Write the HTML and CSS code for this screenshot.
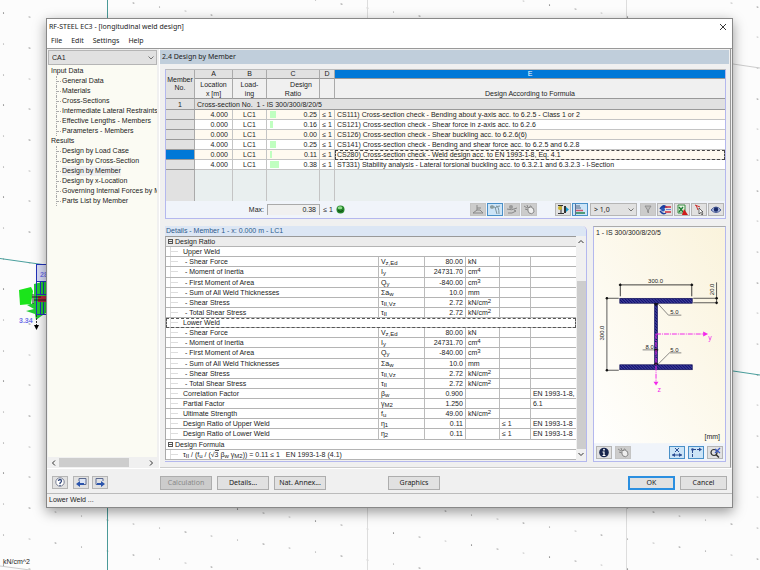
FILE: index.html
```html
<!DOCTYPE html>
<html lang="en">
<head>
<meta charset="utf-8">
<title>RF-STEEL EC3 - [longitudinal weld design]</title>
<link rel="stylesheet" href="styles.css">
</head>
<body>
<svg class="model" viewBox="0 0 760 570" preserveAspectRatio="xMinYMin slice" aria-hidden="true">
  <defs>
    <pattern id="grid" width="78" height="92" patternUnits="userSpaceOnUse" patternTransform="skewY(8.75)">
      <rect x="3" y="12" width="1" height="1" fill="#444"/><rect x="29" y="12" width="1" height="1" fill="#555"/><rect x="55" y="12" width="1" height="1" fill="#999"/>
      <rect x="3" y="43" width="1" height="1" fill="#999"/><rect x="29" y="43" width="1" height="1" fill="#333"/><rect x="55" y="43" width="1" height="1" fill="#777"/>
      <rect x="3" y="74" width="1" height="1" fill="#888"/><rect x="29" y="74" width="1" height="1" fill="#888"/><rect x="55" y="74" width="1" height="1" fill="#444"/>
    </pattern>
  </defs>
  <rect width="760" height="570" fill="url(#grid)"/>
  <path d="M367.5 0V570M626.5 0V570" stroke="#ddd"/>
  <path d="M107.5 0V570" stroke="#4a9a98"/>
  <path d="M733 64L760 68M0 566L30 570" stroke="#ccc" fill="none"/>
  <path d="M0 258.500L46 265M733 371L760 375" stroke="#4a9f9d" fill="none"/>
  <path d="M19 290L31 287L33 291L31 304L20 305Z" fill="#1be41b"/>
  <path d="M34 284L46 281V313L40 317L36 320L35 314L26 311L34 309L27 305L34 303Z" fill="#22cc33"/>
  <rect x="36" y="264" width="10" height="17" fill="#d9dcf6"/>
  <path d="M36.500 264V315M36 264.500H46M36 281.500H46M40.500 282V294M43.500 282V294M37 294.500H46M40.500 302V314M43.500 302V314M36 314.500H46" stroke="#2232b8" fill="none"/>
  <rect x="38" y="296" width="8" height="6" fill="#b8283c"/>
  <path d="M33 294V304M32 297H41M34 300H46" stroke="#222" fill="none"/>
  <path d="M36.500 315V325" stroke="#333" stroke-dasharray="2 1"/><path d="M34 325H39L36.500 330Z"/>
  <text x="40" y="277" class="model-value">28</text>
  <text x="19" y="323" class="model-value">3.34</text>
  <text x="3" y="564" class="model-unit">kN/cm^2</text>
</svg>

<main class="window">
  <header class="titlebar">
    <h1>RF-STEEL EC3 - [longitudinal weld design]</h1>
    <button class="close" aria-label="Close"><svg width="8" height="8" viewBox="0 0 8 8"><path d="M1 1L7 7M7 1L1 7" stroke="#222" stroke-width=".9"/></svg></button>
  </header>
  <nav class="menu"><a href="#">File</a><a href="#">Edit</a><a href="#">Settings</a><a href="#">Help</a></nav>

  <div class="body">
    <aside class="sidebar">
      <span class="pick case">
        <select aria-label="Design case"><option>CA1</option></select>
        <svg width="6" height="4" viewBox="0 0 6 4"><path d="M.5 .5L3 3L5.500 .5" fill="none" stroke="#555" stroke-width=".8"/></svg>
      </span>
      <div class="tree">
        <p>Input Data</p>
        <ul><li><a href="#">General Data</a></li><li><a href="#">Materials</a></li><li><a href="#">Cross-Sections</a></li><li><a href="#">Intermediate Lateral Restraints</a></li><li><a href="#">Effective Lengths - Members</a></li><li><a href="#">Parameters - Members</a></li></ul>
        <p>Results</p>
        <ul><li><a href="#">Design by Load Case</a></li><li><a href="#">Design by Cross-Section</a></li><li><a href="#" class="current">Design by Member</a></li><li><a href="#">Design by x-Location</a></li><li><a href="#">Governing Internal Forces by M</a></li><li><a href="#">Parts List by Member</a></li></ul>
      </div>
      <div class="hscroll">
        <svg width="5" height="6" viewBox="0 0 5 6"><path d="M4 .5L1.500 3L4 5.500" fill="none" stroke="#333"/></svg>
        <div class="rail"><div class="thumb"></div></div>
        <svg width="5" height="6" viewBox="0 0 5 6"><path d="M1 .5L3.500 3L1 5.500" fill="none" stroke="#333"/></svg>
      </div>
    </aside>

    <section class="content">
      <h2>2.4 Design by Member</h2>
      <div class="results">
        <table class="grid">
          <colgroup><col class="c-no"><col class="c-a"><col class="c-b"><col class="c-c"><col class="c-d"><col></colgroup>
          <thead>
            <tr class="letters"><th rowspan="2" class="no">Member<br>No.</th><th>A</th><th>B</th><th>C</th><th>D</th><th class="active">E</th></tr>
            <tr class="names"><th>Location<br>x [m]</th><th>Load-<br>ing</th><th class="design"><span>Design</span><br>Ratio</th><th></th><th class="formula">Design According to Formula</th></tr>
          </thead>
          <tbody>
            <tr class="group"><th>1</th><td colspan="5">Cross-section No.&nbsp; 1 - IS 300/300/8/20/5</td></tr>
            <tr><th></th><td class="num">4.000</td><td class="mid">LC1</td><td class="ratio"><div><i style="width:6px"></i>0.25</div></td><td class="mid">≤ 1</td><td>CS111) Cross-section check - Bending about y-axis acc. to 6.2.5 - Class 1 or 2</td></tr>
            <tr><th></th><td class="num">0.000</td><td class="mid">LC1</td><td class="ratio"><div><i style="width:3px"></i>0.16</div></td><td class="mid">≤ 1</td><td>CS121) Cross-section check - Shear force in z-axis acc. to 6.2.6</td></tr>
            <tr><th></th><td class="num">0.000</td><td class="mid">LC1</td><td class="ratio"><div><i style="width:0px"></i>0.00</div></td><td class="mid">≤ 1</td><td>CS126) Cross-section check - Shear buckling acc. to 6.2.6(6)</td></tr>
            <tr><th></th><td class="num">4.000</td><td class="mid">LC1</td><td class="ratio"><div><i style="width:6px"></i>0.25</div></td><td class="mid">≤ 1</td><td>CS141) Cross-section check - Bending and shear force acc. to 6.2.5 and 6.2.8</td></tr>
            <tr class="selected"><th></th><td class="num">0.000</td><td class="mid">LC1</td><td class="ratio"><div><i style="width:2px"></i>0.11</div></td><td class="mid">≤ 1</td><td class="focus">CS280) Cross-section check - Weld design acc. to EN 1993-1-8, Eq. 4.1</td></tr>
            <tr><th></th><td class="num">4.000</td><td class="mid">LC1</td><td class="ratio"><div><i style="width:9px"></i>0.38</div></td><td class="mid">≤ 1</td><td>ST331) Stability analysis - Lateral torsional buckling acc. to 6.3.2.1 and 6.3.2.3 - I-Section</td></tr>
            <tr class="blank"><th></th><td></td><td></td><td></td><td></td><td></td></tr>
          </tbody>
        </table>
        <div class="summary">
          <span class="max-label">Max:</span><output class="max">0.38</output><span class="limit">≤ 1</span>
          <svg width="9" height="9" viewBox="0 0 9 9"><circle cx="4.500" cy="4.500" r="4" fill="#23852a"/><ellipse cx="4" cy="2.800" rx="2.400" ry="1.500" fill="#8fdc8b"/><path d="M2 5.500Q4.500 7.500 7 5.500" stroke="#0c4a12" fill="none"/></svg>
          <div class="tools">
            <button class="off" aria-label="Internal forces"><svg viewBox="0 0 14 11"><path d="M6 1V6M6 4H10M2 9L6 6H9L12 9M2 9H12" stroke="#888" fill="none"/></svg></button>
            <button class="on" aria-label="Stresses"><svg viewBox="0 0 14 11"><circle cx="4" cy="3" r="2" fill="#97a5a5"/><path d="M2 3H7L9 10M8 2Q11 2 11 10M7 4Q9 2 12 2" stroke="#7d929a" fill="none"/></svg></button>
            <button class="off" aria-label="Deformation"><svg viewBox="0 0 14 11"><circle cx="6" cy="3" r="2" fill="#999"/><path d="M2 5Q6 7 12 4M3 9Q7 10 11 7L9 6" stroke="#888" fill="none"/></svg></button>
            <button class="off" aria-label="Pan"><svg viewBox="0 0 14 11"><path d="M2 2L5 4M5 1L6 4M3 5L6 6" stroke="#888"/><path d="M6 7V4Q7 2 8 4V2Q9 1 10 4Q12 3 12 8Q10 11 7 9Z" fill="#eee" stroke="#888"/></svg></button>
            <button class="gap" aria-label="Section filter"><svg viewBox="0 0 14 11"><path d="M2 1.500H7M2 9.500H8M5 2V9" stroke="#333"/><circle cx="4" cy="4" r="2" fill="#c9b32c"/><path d="M8 2H10V9H8Z" fill="#333"/><path d="M10 3L13 5.500L10 8Z" fill="#159cd0"/></svg></button>
            <button class="on" aria-label="Ratio bars"><svg viewBox="0 0 14 11"><path d="M2.500 0V11" stroke="#58709a"/><path d="M3 2H7M3 4H8" stroke="#7b8fa8" stroke-width="1.500"/><path d="M3 6.500H10" stroke="#d2546a" stroke-width="1.500"/><path d="M3 9H12" stroke="#4f9b78" stroke-width="2"/></svg></button>
            <span class="pick limit-pick">
              <select aria-label="Ratio limit"><option>&gt; 1,0</option></select>
              <svg width="6" height="4" viewBox="0 0 6 4"><path d="M.5 .5L3 3L5.500 .5" fill="none" stroke="#555" stroke-width=".8"/></svg>
            </span>
            <button class="off" aria-label="Filter"><svg viewBox="0 0 14 11"><path d="M4 2H10L7.500 6V9L6.500 8V6Z" fill="#bbb" stroke="#888" stroke-width=".8"/></svg></button>
            <button aria-label="Result combinations"><svg viewBox="0 0 14 11"><path d="M2 5Q5 0 8 3Q4 3 2 5M2 7Q5 11 8 9" stroke="#1c3fa0" stroke-width="1.500" fill="none"/><circle cx="5" cy="5.500" r="2" fill="#2956b8"/><path d="M7 3H13M7 8H13" stroke="#d02c3c" stroke-width="1.500"/><path d="M8 5.500H13" stroke="#6a86d8"/></svg></button>
            <button aria-label="Export to spreadsheet"><svg viewBox="0 0 14 11"><path d="M3 1H10V9H3Z" fill="#e9f5e5" stroke="#3b8b43"/><path d="M4 3L8 8M8 3L4 8" stroke="#218036" stroke-width="1.500"/><path d="M9 5L13 11H7Z" fill="#cf1b1b"/></svg></button>
            <button aria-label="Pick in graphic"><svg viewBox="0 0 14 11"><path d="M3 1L8 3M4 1L6 6" stroke="#c33" stroke-width="1"/><path d="M7 4V10L8.500 8.500L10 11L11 10L9.500 8H11Z" fill="#fff" stroke="#333" stroke-width=".7"/></svg></button>
            <button aria-label="View mode"><svg viewBox="0 0 14 11"><path d="M2 6Q7 0 12 6Q7 11 2 6Z" fill="#aebce2" stroke="#4a5c98"/><circle cx="7" cy="5.500" r="2.200" fill="#172968"/></svg></button>
          </div>
        </div>
      </div>

      <div class="lower">
        <div class="details">
          <h3>Details - Member 1 - x: 0.000 m - LC1</h3>
          <div class="details-body">
            <table class="props">
              <colgroup><col><col class="p-sym"><col class="p-val"><col class="p-unit"><col class="p-lim"><col class="p-ref"></colgroup>
              <tbody>
                <tr class="head"><th colspan="6"><span class="box"></span>Design Ratio</th></tr>
                <tr><td colspan="6" class="l1">Upper Weld</td></tr>
                <tr><td class="l2">- Shear Force</td><td>V<sub>z,Ed</sub></td><td class="num">80.00</td><td>kN</td><td></td><td></td></tr>
                <tr><td class="l2">- Moment of Inertia</td><td>I<sub>y</sub></td><td class="num">24731.70</td><td>cm<sup>4</sup></td><td></td><td></td></tr>
                <tr><td class="l2">- First Moment of Area</td><td>Q<sub>y</sub></td><td class="num">-840.00</td><td>cm<sup>3</sup></td><td></td><td></td></tr>
                <tr><td class="l2">- Sum of All Weld Thicknesses</td><td>Σa<sub>w</sub></td><td class="num">10.0</td><td>mm</td><td></td><td></td></tr>
                <tr><td class="l2">- Shear Stress</td><td>τ<sub>II,Vz</sub></td><td class="num">2.72</td><td>kN/cm<sup>2</sup></td><td></td><td></td></tr>
                <tr><td class="l2">- Total Shear Stress</td><td>τ<sub>II</sub></td><td class="num">2.72</td><td>kN/cm<sup>2</sup></td><td></td><td></td></tr>
                <tr><td colspan="6" class="l1 focus">Lower Weld</td></tr>
                <tr><td class="l2">- Shear Force</td><td>V<sub>z,Ed</sub></td><td class="num">80.00</td><td>kN</td><td></td><td></td></tr>
                <tr><td class="l2">- Moment of Inertia</td><td>I<sub>y</sub></td><td class="num">24731.70</td><td>cm<sup>4</sup></td><td></td><td></td></tr>
                <tr><td class="l2">- First Moment of Area</td><td>Q<sub>y</sub></td><td class="num">-840.00</td><td>cm<sup>3</sup></td><td></td><td></td></tr>
                <tr><td class="l2">- Sum of All Weld Thicknesses</td><td>Σa<sub>w</sub></td><td class="num">10.0</td><td>mm</td><td></td><td></td></tr>
                <tr><td class="l2">- Shear Stress</td><td>τ<sub>II,Vz</sub></td><td class="num">2.72</td><td>kN/cm<sup>2</sup></td><td></td><td></td></tr>
                <tr><td class="l2">- Total Shear Stress</td><td>τ<sub>II</sub></td><td class="num">2.72</td><td>kN/cm<sup>2</sup></td><td></td><td></td></tr>
                <tr><td class="l1">Correlation Factor</td><td>β<sub>w</sub></td><td class="num">0.900</td><td></td><td></td><td>EN 1993-1-8,</td></tr>
                <tr><td class="l1">Partial Factor</td><td>γ<sub>M2</sub></td><td class="num">1.250</td><td></td><td></td><td>6.1</td></tr>
                <tr><td class="l1">Ultimate Strength</td><td>f<sub>u</sub></td><td class="num">49.00</td><td>kN/cm<sup>2</sup></td><td></td><td></td></tr>
                <tr><td class="l1">Design Ratio of Upper Weld</td><td>η<sub>1</sub></td><td class="num">0.11</td><td></td><td>≤ 1</td><td>EN 1993-1-8</td></tr>
                <tr><td class="l1">Design Ratio of Lower Weld</td><td>η<sub>2</sub></td><td class="num">0.11</td><td></td><td>≤ 1</td><td>EN 1993-1-8</td></tr>
                <tr class="sub"><th colspan="6"><span class="box"></span>Design Formula</th></tr>
                <tr><td colspan="6" class="l1">τ<sub>II</sub> / (f<sub>u</sub> / (√<span class="root">3</span> β<sub>w</sub> γ<sub>M2</sub>)) = 0.11 ≤ 1 &nbsp; EN 1993-1-8 (4.1)</td></tr>
              </tbody>
            </table>
            <div class="vscroll">
              <svg width="6" height="5" viewBox="0 0 6 5"><path d="M.5 4L3 1.500L5.500 4" fill="none" stroke="#333"/></svg>
              <div class="rail"><div class="thumb"></div></div>
              <svg width="6" height="5" viewBox="0 0 6 5"><path d="M.5 1L3 3.500L5.500 1" fill="none" stroke="#333"/></svg>
            </div>
          </div>
        </div>

        <div class="section-view">
          <svg class="section" viewBox="0 0 132 217" role="img" aria-label="Cross-section with dimensions">
            <defs>
              <linearGradient id="paper" x1="1" y1="0" x2="0" y2="1"><stop offset="0" stop-color="#faf3dc"/><stop offset="1" stop-color="#fffffe"/></linearGradient>
              <pattern id="hatch" width="3" height="3" patternUnits="userSpaceOnUse"><rect width="3" height="3" fill="#0c0c70"/><path d="M0 0L3 3" stroke="#8686cc" stroke-width=".7"/></pattern>
            </defs>
            <rect width="132" height="217" fill="url(#paper)"/>
            <text x="2" y="7">1 - IS 300/300/8/20/5</text>
            <g fill="none" stroke="#333" stroke-width=".8">
              <path d="M26.500 69V56M98.500 69V56M25 57.500H100" stroke="#111"/>
              <path d="M13 70V144M12 71H25M12 143.500H25M123.500 55V77M100 71H125M100 75.500H125"/>
              <path d="M64 76L75 88H88M64 138L76 126H88M49 123H65" stroke="#555" stroke-width=".7"/>
            </g>
            <g fill="#111"><circle cx="26.500" cy="57.500" r="1.200"/><circle cx="98.500" cy="57.500" r="1.200"/><circle cx="13" cy="71" r="1.200"/><circle cx="13" cy="143.500" r="1.200"/><circle cx="123.500" cy="71" r="1.200"/><circle cx="123.500" cy="75.500" r="1.200"/></g>
            <g fill="url(#hatch)" stroke="#0a0a50" stroke-width=".6"><rect x="61" y="75" width="3" height="64"/><rect x="26" y="71" width="73" height="5"/><rect x="26" y="138" width="73" height="5"/></g>
            <path d="M60 76H65L62.500 79ZM60 138H65L62.500 135Z" fill="#111"/><circle cx="62.500" cy="123" r="1.600" fill="#111"/>
            <path d="M62.500 107H111M62.500 107V156" stroke="#f226ea" stroke-dasharray="5 1 1 1" fill="none"/>
            <path d="M110 104.500L115 107L110 109.500ZM60 155H65L62.500 159Z" fill="#f226ea"/>
            <g class="dim" text-anchor="middle"><text x="62" y="56">300.0</text><text x="81" y="87">5.0</text><text x="81" y="125">5.0</text><text x="56" y="122">8.0</text><text transform="translate(10 106) rotate(-90)">300.0</text><text transform="translate(121 62) rotate(-90)">20.0</text></g>
            <g class="axis"><text x="115" y="113">y</text><text x="64" y="165">z</text></g>
            <text x="127" y="213" text-anchor="end">[mm]</text>
          </svg>
          <div class="view-tools">
            <button aria-label="Info"><svg viewBox="0 0 14 11"><circle cx="7" cy="5.500" r="4.800" fill="#17254d"/><path d="M7 4.500V9M5.500 5H7.500M5.500 8.500H8.500" stroke="#fff" stroke-width="1.200"/><circle cx="7" cy="2.700" r=".9" fill="#fff"/></svg></button>
            <button class="off" aria-label="Pan"><svg viewBox="0 0 14 11"><path d="M2 2L5 4M5 1L6 4M3 5L6 6" stroke="#888"/><path d="M6 7V4Q7 2 8 4V2Q9 1 10 4Q12 3 12 8Q10 11 7 9Z" fill="#eee" stroke="#888"/></svg></button>
            <span class="spring"></span>
            <button class="on" aria-label="Dimensions"><svg viewBox="0 0 14 11"><path d="M5 1L9 5M9 1L5 5M2 8H12" stroke="#2b4c92" fill="none"/><path d="M2 8L5 6V10ZM12 8L9 6V10Z" fill="#2b4c92"/></svg></button>
            <button class="on" aria-label="Axes"><svg viewBox="0 0 14 11"><path d="M3.500 10V2.500H11" stroke="#2b4c92" stroke-dasharray="3 1" fill="none"/><path d="M10 .5L13 2.500L10 4.500Z" fill="#2b4c92"/><circle cx="3.500" cy="2.500" r="1.300" fill="#2b4c92"/></svg></button>
            <button aria-label="Zoom all"><svg viewBox="0 0 14 11"><circle cx="6" cy="5.500" r="3" fill="none" stroke="#333" stroke-width="1.200"/><path d="M8 7.500L11 10.500" stroke="#333" stroke-width="1.500"/><path d="M7 2L12 6M12 1L7 6" stroke="#3d5bc0" stroke-width="1.300"/></svg></button>
          </div>
        </div>
      </div>
    </section>
  </div>

  <footer class="actions">
    <button class="icon" aria-label="Help"><svg viewBox="0 0 14 11"><circle cx="7" cy="5" r="4.200" fill="#fff" stroke="#7a8094"/><path d="M5.500 4Q5.500 2.500 7 2.500T8.500 4Q8.500 5 7 6V7" fill="none" stroke="#33497c" stroke-width="1.300"/><circle cx="7" cy="8.500" r=".7" fill="#33497c"/></svg></button>
    <button class="icon prev" aria-label="Previous table"><svg viewBox="0 0 14 11"><path d="M5 4V1.500H12V7.500H9" fill="#dde5f4" stroke="#5c6a90"/><path d="M2 7L6 4V6H10V8H6V10Z" fill="#2b55ad"/></svg></button>
    <button class="icon next" aria-label="Next table"><svg viewBox="0 0 14 11"><path d="M3 1.500H10V4M5 7.500H3V1.500" fill="#dde5f4" stroke="#5c6a90"/><path d="M12 7L8 4V6H4V8H8V10Z" fill="#2b55ad"/></svg></button>
    <button class="text calc" disabled>Calculation</button>
    <button class="text">Details...</button>
    <button class="text">Nat. Annex...</button>
    <button class="text graphics">Graphics</button>
    <span class="spring"></span>
    <button class="text ok">OK</button>
    <button class="text cancel">Cancel</button>
  </footer>
  <div class="status">Lower Weld ...</div>
</main>
</body>
</html>
```
FILE: styles.css
```css
* { box-sizing: border-box; }

body {
  display: flex;
  min-height: 100vh;
  margin: 0;
  padding: 18px 27px 62px 46px;
  background: #fcfcfc;
  color: #222;
  font: 7px/10px "Liberation Sans", Arial, sans-serif;
}

h1, h2, h3, p, ul { margin: 0; padding: 0; font-size: inherit; font-weight: normal; list-style: none; }
a { color: inherit; text-decoration: none; }
button, select { margin: 0; padding: 0; border: 1px solid #b5b5b5; border-radius: 0; background: #e1e1e1; color: inherit; font: inherit; }
svg { display: block; flex: none; }

.model { position: absolute; inset: 0; width: 100%; height: 100%; }
.model-value { fill: #7073e8; font-size: 7px; font-weight: bold; }
.model-unit { fill: #222; font-size: 7px; }

.window {
  position: relative;
  display: flex;
  flex: 1;
  flex-direction: column;
  min-width: 0;
  border: 1px solid #888;
  background: #f0f0f0;
  box-shadow: 0 4px 12px rgba(0, 0, 0, .4);
}

.titlebar, .menu { display: flex; align-items: center; background: #fff; font-family: "Noto Sans", sans-serif; }
.titlebar { height: 15px; padding: 0 5px 0 2px; justify-content: space-between; }
.titlebar .close { border: 0; background: none; }
.menu { height: 14px; padding-left: 4px; gap: 9px; }

.body { display: grid; flex: 1; grid-template-columns: 113px 1fr; border-top: 1px solid #999; border-bottom: 1px solid #fff; }

.pick { position: relative; display: block; }
.pick select { width: 100%; height: 100%; padding: 0 3px; appearance: none; }
.pick svg { position: absolute; top: 50%; right: 3px; margin-top: -2px; pointer-events: none; }

.sidebar { display: flex; flex-direction: column; min-width: 0; padding: 1px 2px 0 1px; border-right: 1px solid #fff; }
.case { height: 15px; }
.tree { flex: 1; overflow: hidden; padding-top: 1px; background: #fbfbf3; white-space: nowrap; }
.tree p { padding-left: 3px; }
.tree li { display: flex; align-items: center; margin-left: 8px; border-left: 1px dotted #aaa; }
.tree li::before { content: ""; flex: none; width: 4px; margin-right: 1px; border-top: 1px dotted #aaa; }
.tree .current { background: #f0f0f0; }
.hscroll { display: flex; align-items: center; height: 11px; padding: 0 3px; gap: 3px; background: #f0f0f0; }
.hscroll .rail { flex: 1; height: 9px; }
.hscroll .thumb { width: 80%; height: 100%; background: #cdcdcd; }

.content { display: flex; flex-direction: column; min-width: 0; margin-right: 1px; padding: 1px 1px 5px 0; border-right: 1px solid #999; border-bottom: 1px solid #ccc; }
h2 { height: 14px; padding-left: 2px; background: #c0cedb; font: 7px/14px "Noto Sans", sans-serif; }

.results { margin: 5px 3px 7px 5px; border: 1px solid #b4b8ee; border-top-color: #bbb; }
table { border-spacing: 0; table-layout: fixed; width: 100%; }
th { font-weight: normal; }
th, td { padding: 0 2px; white-space: nowrap; line-height: 9px; }

.grid { height: 131px; }
.c-no { width: 29px; }
.c-a { width: 38px; }
.c-b { width: 34px; }
.c-c { width: 53px; }
.c-d { width: 15px; }
.grid th { padding: 0; border-right: 1px solid #aaa; border-bottom: 1px solid #999; background: #e1e1e1; }
.grid .letters { height: 9px; }
.grid .letters th { line-height: 8px; }
.grid .names th { height: 20px; background: #f0f0f0; line-height: 9px; }
.grid .letters .active { background: #0078d7; color: #fff; }
.grid .names .formula { vertical-align: bottom; }
.design span { padding-left: 16px; }
.grid tbody tr { height: 10px; }
.grid tbody .group { height: 11px; }
.grid td { overflow: hidden; border-right: 1px solid #c4c4c4; border-bottom: 1px solid #c4c4c4; background: #fff; }
.grid tbody tr:nth-child(even) td { background: #fffaf0; }
.grid tbody .group td { background: #e1e1e1; border-bottom-color: #999; }
.grid td:last-child, .grid th:last-child { border-right: 0; }
.grid .num { padding-right: 4px; text-align: right; }
.grid .mid { padding: 0; text-align: center; }
.grid .ratio div { display: flex; align-items: center; justify-content: space-between; }
.ratio i { height: 7px; margin-left: 1px; background: #c0ffc0; }
.grid .selected th { background: #0078d7; }
.grid .focus { outline: 1px dashed #444; outline-offset: -1px; }
.grid tbody .blank { height: auto; }
.grid tbody tr.blank td { border-bottom: 0; background: #e9efef; }
.grid tbody .blank th { border-bottom: 0; border-right: 1px solid #aaa; }

.summary { display: flex; align-items: center; height: 17px; padding-right: 1px; background: #f0f4fa; }
.max-label { width: 101px; padding-right: 3px; text-align: right; }
.max { width: 53px; height: 11px; padding-right: 3px; border: 1px solid #aaa; border-width: 1px 1px 0; background: #f0f0f0; text-align: right; }
.limit { width: 16px; text-align: center; }
.tools, .view-tools { display: flex; align-items: center; gap: 1px; }
.tools { margin-left: auto; }
.tools button, .view-tools button, .icon { display: flex; align-items: center; justify-content: center; width: 16px; height: 13px; }
.tools button svg, .view-tools button svg, .icon svg { width: 14px; height: 11px; }
.tools .off, .view-tools .off { background: #ccc; border-color: #c4c4c4; }
.tools .on, .view-tools .on { background: #cce4f7; border-color: #4a90c8; }
.tools .gap { margin-left: 17px; }
.limit-pick { width: 47px; height: 13px; margin: 0 2px 0 1px; font-family: "Noto Sans", sans-serif; }

.lower { display: flex; flex: 1; margin: 0 3px 0 5px; gap: 6px; }
.details { display: flex; flex: 1; flex-direction: column; min-width: 0; border-right: 1px solid #b4b8ee; border-bottom: 1px solid #b4b8ee; border-top-right-radius: 5px; }
h3 { padding-left: 1px; border-top-right-radius: 5px; background: #dce6f4; color: #2c5a8c; line-height: 10px; }
.details-body { display: flex; flex: 1; padding-bottom: 1px; }
.props { flex: 1; min-width: 0; border-top: 1px solid #999; border-left: 1px solid #aaa; }
.p-sym { width: 46px; }
.p-val { width: 41px; }
.p-unit { width: 34px; }
.p-lim { width: 31px; }
.p-ref { width: 45px; }
.props tr { height: 10px; }
.props th, .props td { border-right: 1px solid #bbb; border-bottom: 1px solid #b4b4b4; background: #fff; text-align: left; }
.props td:last-child, .props th { border-right: 0; }
.props .head th { background: #ececec; }
.props .num { text-align: right; }
.props .l1, .props .l2 { background: linear-gradient(#ddd, #ddd) 4px 0 / 1px 100% no-repeat, linear-gradient(#ddd, #ddd) 4px 4px / 8px 1px no-repeat, #fff; }
.props .l1 { padding-left: 17px; }
.props .l2 { padding-left: 19px; }
.props .focus { outline: 1px dashed #555; outline-offset: -1px; }
.root { border-top: 1px solid #555; }
.box { display: inline-block; width: 5px; height: 5px; margin: 0 2px 0 0; border: 1px solid #555; background: linear-gradient(#555, #555) 0 1px / 3px 1px no-repeat; }
sub, sup { font-size: 6px; line-height: 0; }
sub { vertical-align: -1px; }
sup { vertical-align: 2px; }
.vscroll { display: flex; flex-direction: column; align-items: center; width: 10px; padding: 3px 0; gap: 3px; background: #f0f0f0; }
.vscroll .rail { display: flex; flex: 1; flex-direction: column; justify-content: flex-end; width: 9px; }
.vscroll .thumb { height: 83%; background: #cdcdcd; }

.section-view { display: flex; flex-direction: column; width: 133px; border: 1px solid #b4b8ee; border-top-color: #aaa; background: #f0f4fa; }
.section { flex: 1; width: 100%; min-height: 217px; }
.section text { fill: #222; font-size: 7px; }
.section .dim text { font-size: 6px; }
.section .axis text { fill: #f226ea; }
.view-tools { padding: 2px; gap: 3px; }
.spring { flex: 1; }

.actions { display: flex; align-items: center; height: 25px; padding: 3px 5px 0; border-bottom: 1px solid #bbb; }
.actions .prev { margin-left: 5px; }
.actions .next { margin-left: 3px; }
.text { width: 52px; height: 14px; margin-left: 5px; border-color: #adadad; font: 7px/12px "Noto Sans", sans-serif; }
.actions .calc { margin-left: 52px; background: #ccc; color: #888; }
.actions .graphics { margin-left: 62px; }
.actions .ok, .actions .cancel { width: 47px; }
.actions .ok { border: 2px solid #2b8fe0; line-height: 10px; }
.status { height: 13px; padding-left: 2px; line-height: 12px; }
```
